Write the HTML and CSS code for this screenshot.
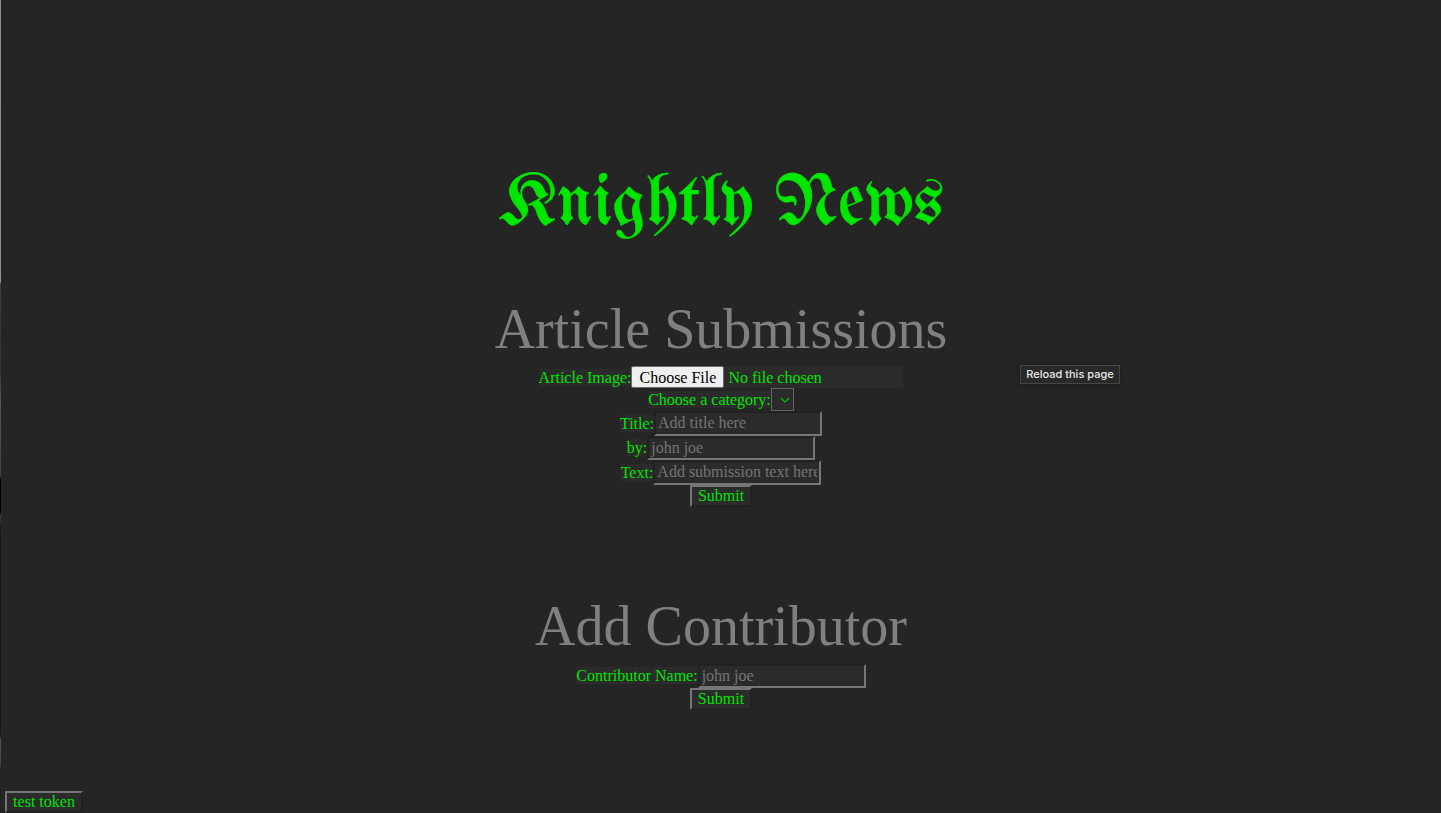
FILE: index.html
```html
<!DOCTYPE html>
<html lang="en">
<head>
<meta charset="utf-8">
<title>Knightly News</title>
<link rel="stylesheet" href="styles.css">
</head>
<body>
<div class="edge"></div>
<main class="page">
  <h1 class="masthead">Knightly News</h1>
  <form class="form article-form">
    <h2 class="heading">Article Submissions</h2>
    <div class="row file-row">
      <label class="label">Article Image:</label>
      <div class="file"><button type="button" class="file-button">Choose File</button><span class="file-name">No file chosen</span></div>
    </div>
    <div class="row select-row">
      <label class="label">Choose a category:</label>
      <div class="select"><svg class="chevron" viewBox="0 0 10 6"><path d="M.8 .8 5 5 9.2 .8"/></svg></div>
    </div>
    <div class="row"><label class="label">Title:</label><input class="input" placeholder="Add title here"></div>
    <div class="row"><label class="label">by:</label><input class="input" placeholder="john joe"></div>
    <div class="row"><label class="label">Text:</label><input class="input" placeholder="Add submission text here"></div>
    <button type="button" class="button">Submit</button>
  </form>
  <form class="form contributor-form">
    <h2 class="heading">Add Contributor</h2>
    <div class="row"><label class="label">Contributor Name:</label><input class="input" placeholder="john joe"></div>
    <button type="button" class="button">Submit</button>
  </form>
  <button type="button" class="button token">test token</button>
</main>
<div class="tooltip">Reload this page</div>
</body>
</html>
```
FILE: styles.css
```css
* { box-sizing: border-box; }
body {
  margin: 0;
  display: flex;
  height: 813px;
  overflow: hidden;
  background: #252525;
  color: #00e600;
  font: 16px/18px "Liberation Serif", "Times New Roman", serif;
}
.edge {
  width: 1px;
  background: linear-gradient(#8d8da0 0, #8b8b98 130px, #92957f 282px, #3d4032 284px, #34372b 370px, #55584a 400px, #44483a 475px, #000 480px, #000 512px, #3c3c34 516px, #171a0e 530px, #171a0e 735px, #555 740px, #444 765px, #222 770px);
}
.page {
  position: relative;
  width: 1440px;
  display: flex;
  flex-direction: column;
  align-items: center;
  padding-top: 164px;
}
.masthead {
  margin: 0;
  height: 82px;
  white-space: nowrap;
  color: #00e600;
  font: 400 72px/82px "UnifrakturMaguntia", "UnifrakturCook", "Old English Text MT", "Liberation Serif", serif;
  -webkit-text-stroke: 0.4px #00e600;
}
.form {
  display: flex;
  flex-direction: column;
  align-items: center;
  margin: 0;
}
.article-form { margin-top: 51px; }
.contributor-form { margin-top: 87px; }
.heading {
  margin: 0;
  height: 69px;
  color: #808080;
  font-size: 56px;
  font-weight: 400;
  line-height: 64px;
  white-space: nowrap;
}
.contributor-form .heading { height: 70px; }
.row {
  display: flex;
  align-items: center;
  justify-content: center;
  height: 24.5px;
}
.file-row { height: 22px; }
.select-row { height: 23px; }
.label {
  height: 17px;
  line-height: 17px;
  background: #2b2b2b;
  white-space: nowrap;
}
.file {
  display: flex;
  align-items: center;
  width: 272px;
  height: 22px;
  background: #2b2b2b;
}
.file-button {
  width: 93px;
  height: 22px;
  padding: 1px 0 0;
  border: 1px solid #6b6b6b;
  border-radius: 2px;
  background: #efefef;
  color: #000;
  font: inherit;
}
.file-name { margin: 1px 0 0 4px; }
.select {
  display: flex;
  align-items: center;
  justify-content: flex-end;
  width: 23px;
  height: 23px;
  padding-right: 3px;
  border: 1px solid #626262;
  background: #2b2b2b;
}
.chevron {
  width: 10px;
  height: 6px;
  fill: none;
  stroke: #00c800;
  stroke-width: 1.2;
}
.input {
  width: 168px;
  height: 24.5px;
  padding: 1px 2px;
  border: 2px solid;
  border-color: #212121 #767676 #767676 #212121;
  border-radius: 0;
  background: #2b2b2b;
  color: #00e600;
  font: inherit;
}
.input::placeholder { color: #757575; opacity: 1; }
.button {
  width: 62px;
  height: 22px;
  padding: 0;
  border: 2px solid;
  border-color: #767676 #212121 #212121 #767676;
  background: #2b2b2b;
  color: #00e600;
  font: inherit;
}
.token {
  position: absolute;
  left: 4px;
  top: 791px;
  width: 78px;
}
.tooltip {
  position: absolute;
  left: 1020px;
  top: 365px;
  width: 100px;
  height: 19px;
  border: 1px solid #454545;
  background: #292a28;
  box-shadow: 0 1px 4px #1a1a1a;
  color: #e8e8e8;
  font: 500 11px/17px Inter, sans-serif;
  text-align: center;
  white-space: nowrap;
}
```
